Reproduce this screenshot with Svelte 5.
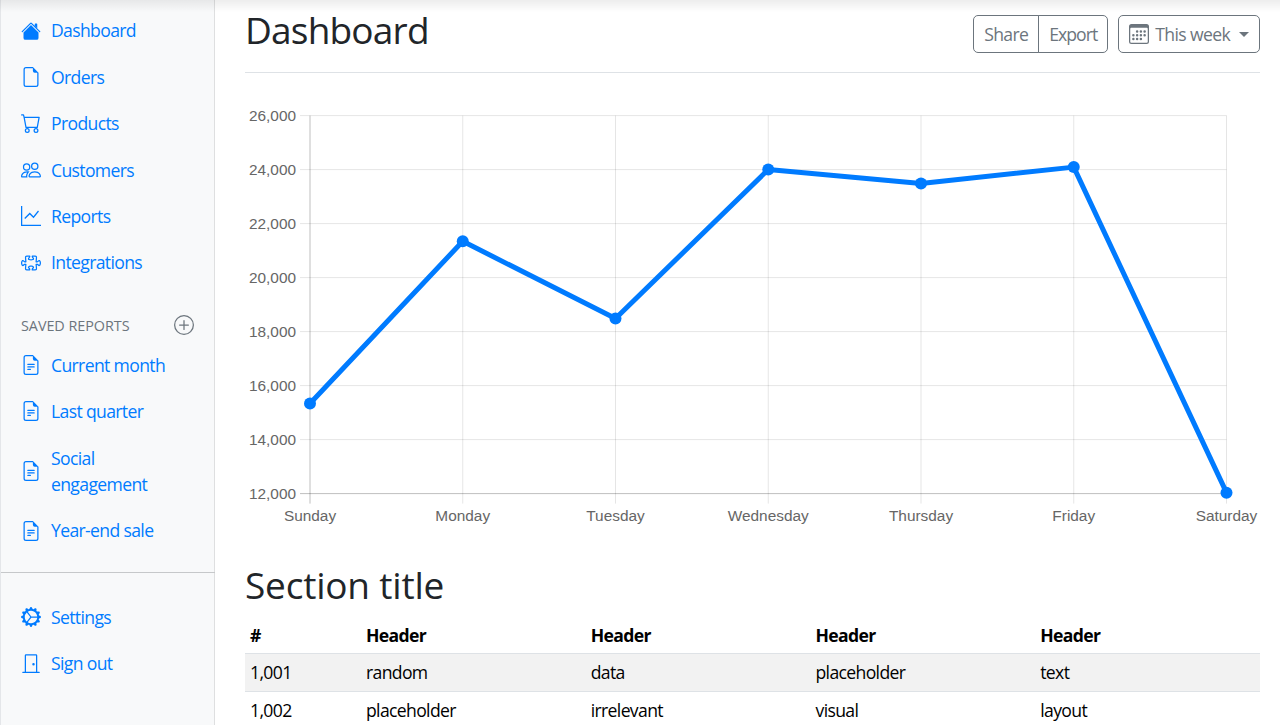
<script>
	const paths = {
		house: 'M8 3.293l6 6V13.5a1.5 1.5 0 0 1-1.5 1.5h-9A1.5 1.5 0 0 1 2 13.5V9.293l6-6zm5-.793V6l-2-2V2.5a.5.5 0 0 1 .5-.5h1a.5.5 0 0 1 .5.5zM7.293 1.5a1 1 0 0 1 1.414 0l6.647 6.646a.5.5 0 0 1-.708.708L8 2.207 1.354 8.854a.5.5 0 1 1-.708-.708L7.293 1.5z',
		file: 'M14 4.5V14a2 2 0 0 1-2 2H4a2 2 0 0 1-2-2V2a2 2 0 0 1 2-2h5.5L14 4.5zm-3 0A1.5 1.5 0 0 1 9.5 3V1H4a1 1 0 0 0-1 1v12a1 1 0 0 0 1 1h8a1 1 0 0 0 1-1V4.5h-2z',
		cart: 'M0 1.5A.5.5 0 0 1 .5 1H2a.5.5 0 0 1 .485.379L2.89 3H14.5a.5.5 0 0 1 .491.592l-1.5 8A.5.5 0 0 1 13 12H4a.5.5 0 0 1-.491-.408L2.01 3.607 1.61 2H.5a.5.5 0 0 1-.5-.5zM3.102 4l1.313 7h8.17l1.313-7H3.102zM5 12a2 2 0 1 0 0 4 2 2 0 0 0 0-4zm7 0a2 2 0 1 0 0 4 2 2 0 0 0 0-4zm-7 1a1 1 0 1 1 0 2 1 1 0 0 1 0-2zm7 0a1 1 0 1 1 0 2 1 1 0 0 1 0-2z',
		people: 'M15 14s1 0 1-1-1-4-5-4-5 3-5 4 1 1 1 1h8Zm-7.978-1A.261.261 0 0 1 7 12.996c.001-.264.167-1.03.76-1.72C8.312 10.629 9.282 10 11 10c1.717 0 2.687.63 3.24 1.276.593.69.758 1.457.76 1.72l-.008.002a.274.274 0 0 1-.014.002H7.022ZM11 7a2 2 0 1 0 0-4 2 2 0 0 0 0 4Zm3-2a3 3 0 1 1-6 0 3 3 0 0 1 6 0ZM6.936 9.28a5.88 5.88 0 0 0-1.23-.247A7.35 7.35 0 0 0 5 9c-4 0-5 3-5 4 0 .667.333 1 1 1h4.216A2.238 2.238 0 0 1 5 13c0-1.01.377-2.042 1.09-2.904.243-.294.526-.569.846-.816ZM4.92 10A5.493 5.493 0 0 0 4 13H1c0-.26.164-1.03.76-1.724.545-.636 1.492-1.256 3.16-1.275ZM1.5 5.5a3 3 0 1 1 6 0 3 3 0 0 1-6 0Zm3-2a2 2 0 1 0 0 4 2 2 0 0 0 0-4Z',
		graph: 'M0 0h1v16H0V0zm1 15h15v1H1v-1zM14.39 4.312L10.041 9.75 7 6.707l-3.646 3.647-.708-.708L7 5.293 9.959 8.25l3.65-4.563.781.624z',
		puzzle: 'M3.112 3.645A1.5 1.5 0 0 1 4.605 2H7a.5.5 0 0 1 .5.5v.382c0 .696-.497 1.182-.872 1.469a.459.459 0 0 0-.115.118.113.113 0 0 0-.012.025L6.5 4.5v.003l.003.01c.004.01.014.028.036.053a.86.86 0 0 0 .27.194C7.09 4.9 7.51 5 8 5c.492 0 .912-.1 1.19-.24a.86.86 0 0 0 .271-.194.213.213 0 0 0 .039-.063v-.009a.112.112 0 0 0-.012-.025.459.459 0 0 0-.115-.118c-.375-.287-.872-.773-.872-1.469V2.5A.5.5 0 0 1 9 2h2.395a1.5 1.5 0 0 1 1.493 1.645L12.645 6.5h.237c.195 0 .42-.147.675-.48.21-.274.528-.52.943-.52.568 0 .947.447 1.154.862C15.877 6.807 16 7.387 16 8s-.123 1.193-.346 1.638c-.207.415-.586.862-1.154.862-.415 0-.733-.246-.943-.52-.255-.333-.48-.48-.675-.48h-.237l.243 2.855A1.5 1.5 0 0 1 11.395 14H9a.5.5 0 0 1-.5-.5v-.382c0-.696.497-1.182.872-1.469a.459.459 0 0 0 .115-.118.113.113 0 0 0 .012-.025L9.5 11.5v-.003a.214.214 0 0 0-.039-.064.859.859 0 0 0-.27-.193C8.91 11.1 8.49 11 8 11c-.491 0-.912.1-1.19.24a.859.859 0 0 0-.271.194.214.214 0 0 0-.039.063v.003l.001.006a.113.113 0 0 0 .012.025c.016.027.05.068.115.118.375.287.872.773.872 1.469v.382a.5.5 0 0 1-.5.5H4.605a1.5 1.5 0 0 1-1.493-1.645L3.356 9.5h-.238c-.195 0-.42.147-.675.48-.21.274-.528.52-.943.52-.568 0-.947-.447-1.154-.862C.123 9.193 0 8.613 0 8s.123-1.193.346-1.638C.553 5.947.932 5.5 1.5 5.5c.415 0 .733.246.943.52.255.333.48.48.675.48h.238l-.244-2.855zM4.605 3a.5.5 0 0 0-.498.55l.001.007.29 3.4A.5.5 0 0 1 3.9 7.5h-.782c-.696 0-1.182-.497-1.469-.872a.459.459 0 0 0-.118-.115.112.112 0 0 0-.025-.012L1.5 6.5h-.003a.213.213 0 0 0-.064.039.86.86 0 0 0-.193.27C1.1 7.09 1 7.51 1 8c0 .491.1.912.24 1.19.07.14.14.225.194.271a.213.213 0 0 0 .063.039H1.5l.006-.001a.112.112 0 0 0 .025-.012.459.459 0 0 0 .118-.115c.287-.375.773-.872 1.469-.872H3.9a.5.5 0 0 1 .498.542l-.29 3.408a.5.5 0 0 0 .497.55h1.878c-.048-.166-.195-.352-.463-.557-.274-.21-.52-.528-.52-.943 0-.568.447-.947.862-1.154C6.807 10.123 7.387 10 8 10s1.193.123 1.638.346c.415.207.862.586.862 1.154 0 .415-.246.733-.52.943-.268.205-.415.39-.463.557h1.878a.5.5 0 0 0 .498-.55l-.001-.007-.29-3.4A.5.5 0 0 1 12.1 8.5h.782c.696 0 1.182.497 1.469.872.05.065.091.099.118.115.013.008.021.01.025.012a.02.02 0 0 0 .006.001h.003a.214.214 0 0 0 .064-.039.86.86 0 0 0 .193-.27c.14-.28.24-.7.24-1.191 0-.492-.1-.912-.24-1.19a.86.86 0 0 0-.194-.271.215.215 0 0 0-.063-.039H14.5l-.006.001a.113.113 0 0 0-.025.012.459.459 0 0 0-.118.115c-.287.375-.773.872-1.469.872H12.1a.5.5 0 0 1-.498-.543l.29-3.407a.5.5 0 0 0-.497-.55H9.517c.048.166.195.352.463.557.274.21.52.528.52.943 0 .568-.447.947-.862 1.154C9.193 5.877 8.613 6 8 6s-1.193-.123-1.638-.346C5.947 5.447 5.5 5.068 5.5 4.5c0-.415.246-.733.52-.943.268-.205.415-.39.463-.557H4.605z',
		report: 'M5.5 7a.5.5 0 0 0 0 1h5a.5.5 0 0 0 0-1h-5zM5 9.5a.5.5 0 0 1 .5-.5h5a.5.5 0 0 1 0 1h-5a.5.5 0 0 1-.5-.5zm0 2a.5.5 0 0 1 .5-.5h2a.5.5 0 0 1 0 1h-2a.5.5 0 0 1-.5-.5zM9.5 0H4a2 2 0 0 0-2 2v12a2 2 0 0 0 2 2h8a2 2 0 0 0 2-2V4.5L9.5 0zm0 1v2A1.5 1.5 0 0 0 11 4.5h2V14a1 1 0 0 1-1 1H4a1 1 0 0 1-1-1V2a1 1 0 0 1 1-1h5.5z',
		gear: 'M7.068.727c.243-.97 1.62-.97 1.864 0l.071.286a.96.96 0 0 0 1.622.434l.205-.211c.695-.719 1.888-.03 1.613.931l-.08.284a.96.96 0 0 0 1.187 1.187l.283-.081c.96-.275 1.65.918.931 1.613l-.211.205a.96.96 0 0 0 .434 1.622l.286.071c.97.243.97 1.62 0 1.864l-.286.071a.96.96 0 0 0-.434 1.622l.211.205c.719.695.03 1.888-.931 1.613l-.284-.08a.96.96 0 0 0-1.187 1.187l.081.283c.275.96-.918 1.65-1.613.931l-.205-.211a.96.96 0 0 0-1.622.434l-.071.286c-.243.97-1.62.97-1.864 0l-.071-.286a.96.96 0 0 0-1.622-.434l-.205.211c-.695.719-1.888.03-1.613-.931l.08-.284a.96.96 0 0 0-1.186-1.187l-.284.081c-.96.275-1.65-.918-.931-1.613l.211-.205a.96.96 0 0 0-.434-1.622l-.286-.071c-.97-.243-.97-1.62 0-1.864l.286-.071a.96.96 0 0 0 .434-1.622l-.211-.205c-.719-.695-.03-1.888.931-1.613l.284.08a.96.96 0 0 0 1.187-1.186l-.081-.284c-.275-.96.918-1.65 1.613-.931l.205.211a.96.96 0 0 0 1.622-.434l.071-.286zM12.973 8.5H8.25l-2.834 3.779A4.998 4.998 0 0 0 12.973 8.5zm0-1a4.998 4.998 0 0 0-7.557-3.779l2.834 3.78h4.723zM4.617 4.322A4.984 4.984 0 0 0 3.002 8c0 1.455.622 2.765 1.615 3.678L7.375 8 4.617 4.322z',
		door: 'M3 2a1 1 0 0 1 1-1h8a1 1 0 0 1 1 1v13h1.5a.5.5 0 0 1 0 1h-13a.5.5 0 0 1 0-1H3V2zm1 13h8V2H4v13zM9 9a1 1 0 1 0 2 0 1 1 0 0 0-2 0z',
		plus: 'M8 15A7 7 0 1 1 8 1a7 7 0 0 1 0 14zm0 1A8 8 0 1 0 8 0a8 8 0 0 0 0 16zM8 4a.5.5 0 0 1 .5.5v3h3a.5.5 0 0 1 0 1h-3v3a.5.5 0 0 1-1 0v-3h-3a.5.5 0 0 1 0-1h3v-3A.5.5 0 0 1 8 4z',
		calendar: 'M14 0H2a2 2 0 0 0-2 2v12a2 2 0 0 0 2 2h12a2 2 0 0 0 2-2V2a2 2 0 0 0-2-2zM1 3.857C1 3.384 1.448 3 2 3h12c.552 0 1 .384 1 .857v10.286c0 .473-.448.857-1 .857H2c-.552 0-1-.384-1-.857V3.857zM6.5 7a1 1 0 1 0 0-2 1 1 0 0 0 0 2zm3 0a1 1 0 1 0 0-2 1 1 0 0 0 0 2zm3 0a1 1 0 1 0 0-2 1 1 0 0 0 0 2zm-9 3a1 1 0 1 0 0-2 1 1 0 0 0 0 2zm3 0a1 1 0 1 0 0-2 1 1 0 0 0 0 2zm3 0a1 1 0 1 0 0-2 1 1 0 0 0 0 2zm3 0a1 1 0 1 0 0-2 1 1 0 0 0 0 2zm-9 3a1 1 0 1 0 0-2 1 1 0 0 0 0 2zm3 0a1 1 0 1 0 0-2 1 1 0 0 0 0 2zm3 0a1 1 0 1 0 0-2 1 1 0 0 0 0 2z'
	};

	const mainNav = [
		{ label: 'Dashboard', icon: 'house' },
		{ label: 'Orders', icon: 'file' },
		{ label: 'Products', icon: 'cart' },
		{ label: 'Customers', icon: 'people' },
		{ label: 'Reports', icon: 'graph' },
		{ label: 'Integrations', icon: 'puzzle' }
	];
	const savedNav = ['Current month', 'Last quarter', 'Social engagement', 'Year-end sale'].map((label) => ({
		label,
		icon: 'report'
	}));
	const footNav = [
		{ label: 'Settings', icon: 'gear' },
		{ label: 'Sign out', icon: 'door' }
	];

	// chart, in page-like coordinates (see the svg viewBox)
	const days = ['Sunday', 'Monday', 'Tuesday', 'Wednesday', 'Thursday', 'Friday', 'Saturday'];
	const values = [15339, 21345, 18483, 24003, 23489, 24092, 12034];
	const ticks = [26000, 24000, 22000, 20000, 18000, 16000, 14000, 12000];
	const left = 310;
	const right = 1226.5;
	const top = 115.6;
	const bottom = 493.6;
	const xAt = (i) => left + ((right - left) * i) / 6;
	const yAt = (v) => bottom - ((v - 12000) * (bottom - top)) / 14000;
	const points = values.map((v, i) => ({ x: xAt(i), y: yAt(v) }));
	const line = points.map((p) => `${p.x},${p.y}`).join(' ');

	const headers = ['#', 'Header', 'Header', 'Header', 'Header'];
	const rows = [
		['1,001', 'random', 'data', 'placeholder', 'text'],
		['1,002', 'placeholder', 'irrelevant', 'visual', 'layout']
	];
</script>

{#snippet icon(name, size = 20)}
	<svg viewBox="0 0 16 16" width={size} height={size} fill="currentColor" fill-rule="evenodd">
		<path d={paths[name]} />
	</svg>
{/snippet}

{#snippet navlist(items)}
	<ul class="nav">
		{#each items as item}
			<li>
				<a href="#top" class="nav-link">
					<span class="nav-icon">{@render icon(item.icon)}</span>
					<span class="nav-label">{item.label}</span>
				</a>
			</li>
		{/each}
	</ul>
{/snippet}

<div class="page">
	<div class="top-shadow"></div>
	<aside class="sidebar">
		{@render navlist(mainNav)}
		<div class="saved-heading">
			<span>SAVED REPORTS</span>
			<span class="saved-add">{@render icon('plus')}</span>
		</div>
		{@render navlist(savedNav)}
		<hr />
		{@render navlist(footNav)}
	</aside>

	<main class="main">
		<header class="head">
			<h1>Dashboard</h1>
			<div class="toolbar">
				<div class="btn-group">
					<button class="btn">Share</button>
					<button class="btn">Export</button>
				</div>
				<button class="btn week">
					{@render icon('calendar')}
					This week
					<span class="caret"></span>
				</button>
			</div>
		</header>

		<svg class="chart" viewBox="245 98 1015 432" width="1015" height="432">
			{#each ticks as t}
				<line class={t === 12000 ? 'axis' : 'grid'} x1="300" x2={right} y1={yAt(t)} y2={yAt(t)} />
				<text class="tick" x="296" y={yAt(t) + 5} text-anchor="end">{t.toLocaleString('en-US')}</text>
			{/each}
			{#each days as d, i}
				<line class={i === 0 ? 'axis' : 'grid'} x1={xAt(i)} x2={xAt(i)} y1={top} y2="503.6" />
				<text class="tick" x={xAt(i)} y="521" text-anchor="middle">{d}</text>
			{/each}
			<polyline class="series" points={line} />
			{#each points as p}
				<circle class="dot" cx={p.x} cy={p.y} r="6" />
			{/each}
		</svg>

		<h2>Section title</h2>
		<table>
			<colgroup>
				<col class="col-id" />
			</colgroup>
			<thead>
				<tr>
					{#each headers as h}<th>{h}</th>{/each}
				</tr>
			</thead>
			<tbody>
				{#each rows as row, i}
					<tr class:striped={i % 2 === 0}>
						{#each row as cell}<td>{cell}</td>{/each}
					</tr>
				{/each}
			</tbody>
		</table>
	</main>
</div>

<style>
	:global(body) {
		margin: 0;
		background: #fff;
		overflow: hidden;
	}

	.page {
		display: flex;
		height: 725px;
		overflow: hidden;
		position: relative;
		font-family: 'Open Sans', 'Noto Sans', sans-serif;
		font-size: 17.6px;
		line-height: 26.4px;
		letter-spacing: -0.65px;
		color: #212529;
	}

	.top-shadow {
		position: absolute;
		top: 0;
		left: 0;
		right: 0;
		height: 12px;
		background: linear-gradient(rgba(0, 0, 0, 0.07), rgba(0, 0, 0, 0));
		pointer-events: none;
	}

	.sidebar {
		flex: 0 0 215px;
		box-sizing: border-box;
		padding-top: 7.4px;
		background: #f8f9fa;
		border-left: 1px solid #e4e6e9;
		box-shadow: inset -1px 0 0 rgba(0, 0, 0, 0.1);
	}

	.nav {
		list-style: none;
		margin: 0;
		padding: 0;
	}

	.nav-link {
		display: flex;
		align-items: center;
		gap: 10px;
		padding: 10px 20px;
		color: #007bff;
		text-decoration: none;
	}

	.nav-icon {
		display: flex;
		flex: 0 0 20px;
	}

	.nav-label {
		max-width: 130px;
	}

	.saved-heading {
		display: flex;
		align-items: center;
		justify-content: space-between;
		padding: 28.9px 21px 6px 20px;
		font-size: 14.4px;
		line-height: 21px;
		letter-spacing: -0.05px;
		color: #6c757d;
	}

	.saved-add {
		display: flex;
	}

	hr {
		margin: 18px 0 21px;
		border: 0;
		border-top: 1px solid #c6c8ca;
	}

	.main {
		flex: 1;
		min-width: 0;
		padding: 0 20px 0 30px;
	}

	.head {
		display: flex;
		justify-content: space-between;
		height: 72px;
		box-sizing: content-box;
		margin-bottom: 25px;
		border-bottom: 1px solid #dee2e6;
	}

	h1 {
		margin: 0;
		font-size: 37px;
		font-weight: 400;
		line-height: 60px;
		letter-spacing: -0.8px;
	}

	.toolbar {
		display: flex;
		gap: 10px;
		padding-top: 15px;
		align-items: flex-start;
	}

	.btn-group {
		display: flex;
	}

	.btn {
		display: flex;
		align-items: center;
		gap: 6px;
		height: 38px;
		padding: 0 10px;
		background: transparent;
		border: 1px solid #6c757d;
		border-radius: 5px;
		color: #6c757d;
		font: inherit;
		letter-spacing: inherit;
	}

	.btn-group .btn:first-child {
		border-radius: 5px 0 0 5px;
	}

	.btn-group .btn:last-child {
		margin-left: -1px;
		border-radius: 0 5px 5px 0;
		letter-spacing: -0.95px;
	}

	.caret {
		margin-left: 3px;
		border-top: 5px solid #6c757d;
		border-left: 5px solid transparent;
		border-right: 5px solid transparent;
	}

	.chart {
		display: block;
	}

	.grid {
		stroke: rgba(0, 0, 0, 0.1);
		stroke-width: 1;
	}

	.axis {
		stroke: rgba(0, 0, 0, 0.25);
		stroke-width: 1;
	}

	.tick {
		font-family: 'Liberation Sans', Arial, sans-serif;
		font-size: 15.4px;
		letter-spacing: 0;
		fill: #666;
	}

	.series {
		fill: none;
		stroke: #007bff;
		stroke-width: 5;
		stroke-linejoin: round;
	}

	.dot {
		fill: #007bff;
	}

	h2 {
		margin: 25px 0 0;
		font-size: 37px;
		font-weight: 400;
		line-height: 60px;
		letter-spacing: -0.2px;
	}

	table {
		width: 100%;
		margin-top: 2px;
		border-collapse: collapse;
		table-layout: fixed;
		color: #000;
	}

	.col-id {
		width: 116px;
	}

	th,
	td {
		padding: 5px;
		text-align: left;
		font-weight: 400;
	}

	th {
		font-weight: 700;
	}

	td {
		border-top: 1px solid #dee2e6;
	}

	.striped {
		background: #f2f2f2;
	}
</style>
